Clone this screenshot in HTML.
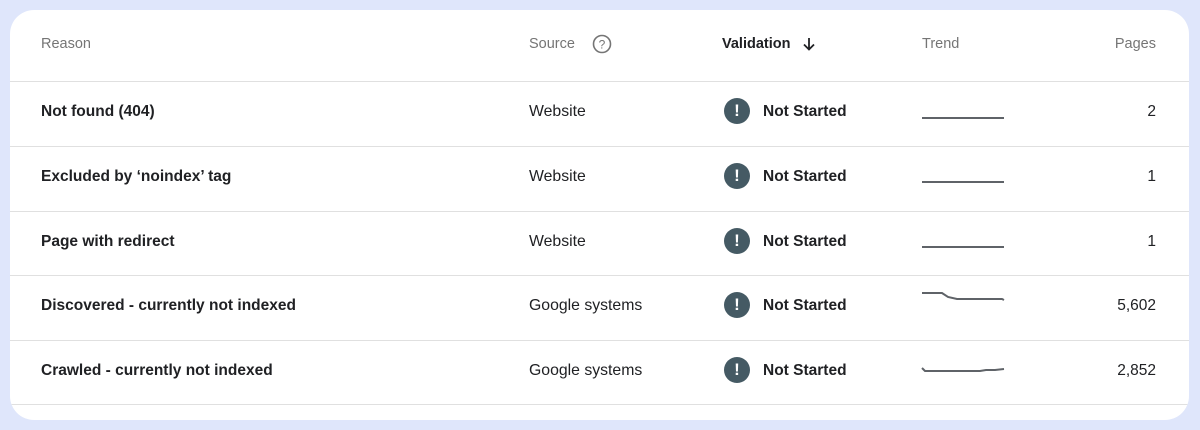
<!DOCTYPE html>
<html><head><style>
body{margin:0;width:1200px;height:430px;background:#dfe6fb;font-family:"Liberation Sans",Arial,sans-serif;overflow:hidden}
.card{position:absolute;left:10px;top:10px;width:1179px;height:410px;background:#fff;border-radius:24px;overflow:hidden}
.row{position:absolute;left:0;width:1179px;border-bottom:1px solid #e0e0e0}
.t{position:absolute;white-space:nowrap}
.h{font-size:14.5px;color:#757575}
.r{font-size:15.5px;font-weight:bold;color:#202124}
.s{font-size:15.8px;color:#202124}
.ic{position:absolute;left:714px;width:26px;height:26px;border-radius:50%;background:#455a64;color:#fff;font-weight:bold;font-size:17px;text-align:center;line-height:26px}
.p{position:absolute;right:33px;font-size:15.5px;color:#202124}
svg{position:absolute;left:910px}
</style></head><body><div class="card">
<div class="row" style="top:0;height:71px">
<div class="t h" style="left:31px;top:26px">Reason</div>
<div class="t h" style="left:519px;top:26px">Source</div>
<svg style="left:582px;top:24px" width="20" height="20" viewBox="0 0 20 20"><circle cx="10" cy="10" r="8.5" fill="none" stroke="#757575" stroke-width="1.6"/><text x="10" y="14.5" font-size="12" text-anchor="middle" fill="#757575" font-family="Liberation Sans">?</text></svg>
<div class="t" style="left:712px;top:26px;font-size:14.5px;font-weight:bold;color:#202124">Validation</div>
<svg style="left:791px;top:26px" width="16" height="16" viewBox="0 0 16 16"><path d="M8 2V13M3 8.5L8 13.5L13 8.5" fill="none" stroke="#202124" stroke-width="1.8"/></svg>
<div class="t h" style="left:912px;top:26px">Trend</div>
<div class="t h" style="right:33px;top:26px">Pages</div>
</div>
<div class="row" style="top:72px;height:64px"><div class="t r" style="left:31px;top:21px">Not found (404)</div><div class="t s" style="left:519px;top:21px">Website</div><div class="ic" style="top:16px">!</div><div class="t r" style="left:753px;top:21px">Not Started</div><svg style="top:23px" width="90" height="20"><path d="M2 13H84" stroke="#5f6368" stroke-width="2" fill="none"/></svg><div class="p" style="top:21px">2</div></div>
<div class="row" style="top:137px;height:64px"><div class="t r" style="left:31px;top:21px">Excluded by ‘noindex’ tag</div><div class="t s" style="left:519px;top:21px">Website</div><div class="ic" style="top:16px">!</div><div class="t r" style="left:753px;top:21px">Not Started</div><svg style="top:23px" width="90" height="20"><path d="M2 12H84" stroke="#5f6368" stroke-width="2" fill="none"/></svg><div class="p" style="top:21px">1</div></div>
<div class="row" style="top:202px;height:63px"><div class="t r" style="left:31px;top:21px">Page with redirect</div><div class="t s" style="left:519px;top:21px">Website</div><div class="ic" style="top:16px">!</div><div class="t r" style="left:753px;top:21px">Not Started</div><svg style="top:23px" width="90" height="20"><path d="M2 12H84" stroke="#5f6368" stroke-width="2" fill="none"/></svg><div class="p" style="top:21px">1</div></div>
<div class="row" style="top:266px;height:64px"><div class="t r" style="left:31px;top:21px">Discovered - currently not indexed</div><div class="t s" style="left:519px;top:21px">Google systems</div><div class="ic" style="top:16px">!</div><div class="t r" style="left:753px;top:21px">Not Started</div><svg style="top:11px" width="90" height="20"><path d="M2 6H22L28 10L37 12H82L84 13" stroke="#5f6368" stroke-width="2" fill="none"/></svg><div class="p" style="top:21px">5,602</div></div>
<div class="row" style="top:331px;height:63px"><div class="t r" style="left:31px;top:21px">Crawled - currently not indexed</div><div class="t s" style="left:519px;top:21px">Google systems</div><div class="ic" style="top:16px">!</div><div class="t r" style="left:753px;top:21px">Not Started</div><svg style="top:19px" width="90" height="20"><path d="M2 8L5 11H60L66 10H75L84 9" stroke="#5f6368" stroke-width="2" fill="none"/></svg><div class="p" style="top:21px">2,852</div></div>
</div></body></html>
